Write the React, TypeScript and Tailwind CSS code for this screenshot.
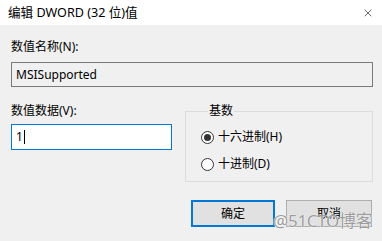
import { X } from 'lucide-react';

const font = { fontFamily: '"Noto Sans", "Noto Sans CJK SC", sans-serif' };

const Radio = ({ checked, label }: { checked?: boolean; label: string }) => (
  <div className="flex items-center gap-[4px] h-[16px]">
    <span className="w-[13px] h-[13px] rounded-full border border-[#333] bg-white flex items-center justify-center">
      {checked && <span className="w-[7px] h-[7px] rounded-full bg-[#333]" />}
    </span>
    <span className="text-[12px] leading-[16px] text-black">{label}</span>
  </div>
);

export default function App() {
  return (
    <div className="w-[382px] h-[241px] bg-[#f0f0f0] relative overflow-hidden" style={font}>
      <div className="h-[25px] bg-white flex items-center justify-between pl-[8px] pr-[8px]">
        <span className="text-[12.6px] leading-[16px] text-black">编辑 DWORD (32 位)值</span>
        <X className="w-[12px] h-[12px] text-black" strokeWidth={1.2} />
      </div>

      <div className="pl-[11px] pr-[9px] pt-[14px]">
        <div className="text-[12px] leading-[16px] text-black">数值名称(N):</div>
        <div className="mt-[7px] h-[25px] border border-[#7a7a7a] bg-[#f0f0f0] flex items-center px-[4px] text-[12px] text-black">
          MSISupported
        </div>

        <div className="flex mt-[16px] gap-[13px]">
          <div className="w-[161px] shrink-0">
            <div className="text-[12px] leading-[16px] text-black">数值数据(V):</div>
            <div className="mt-[5px] h-[26px] border border-[#0078d7] bg-white flex items-center px-[4px] text-[12px] text-black">
              <span>1</span>
              <span className="w-[1px] h-[14px] bg-black ml-[1px]" />
            </div>
          </div>
          <fieldset className="flex-1 border border-[#dcdcdc] h-[79px] pl-[15px] pt-[10px] flex flex-col gap-[11px]">
            <legend className="ml-[7px] px-[1px] text-[12px] leading-[16px] text-black">基数</legend>
            <Radio checked label="十六进制(H)" />
            <Radio label="十进制(D)" />
          </fieldset>
        </div>

        <div className="flex justify-end gap-[11px] mt-[18px] pr-[1px]">
          <button className="w-[84px] h-[27px] border-2 border-[#0078d7] bg-[#e1e1e1] text-[12px] text-black">确定</button>
          <button className="w-[86px] h-[27px] border border-[#adadad] bg-[#e1e1e1] text-[12px] text-black">取消</button>
        </div>
      </div>

      <div
        className="absolute left-[273px] top-[210px] whitespace-nowrap text-[17px] leading-[22px] tracking-[-0.3px] text-[#9c9c9c]"
        style={{ textShadow: '0 0 1px #fff, 0 0 1px #fff' }}
      >
        @51CTO博客
      </div>
    </div>
  );
}
